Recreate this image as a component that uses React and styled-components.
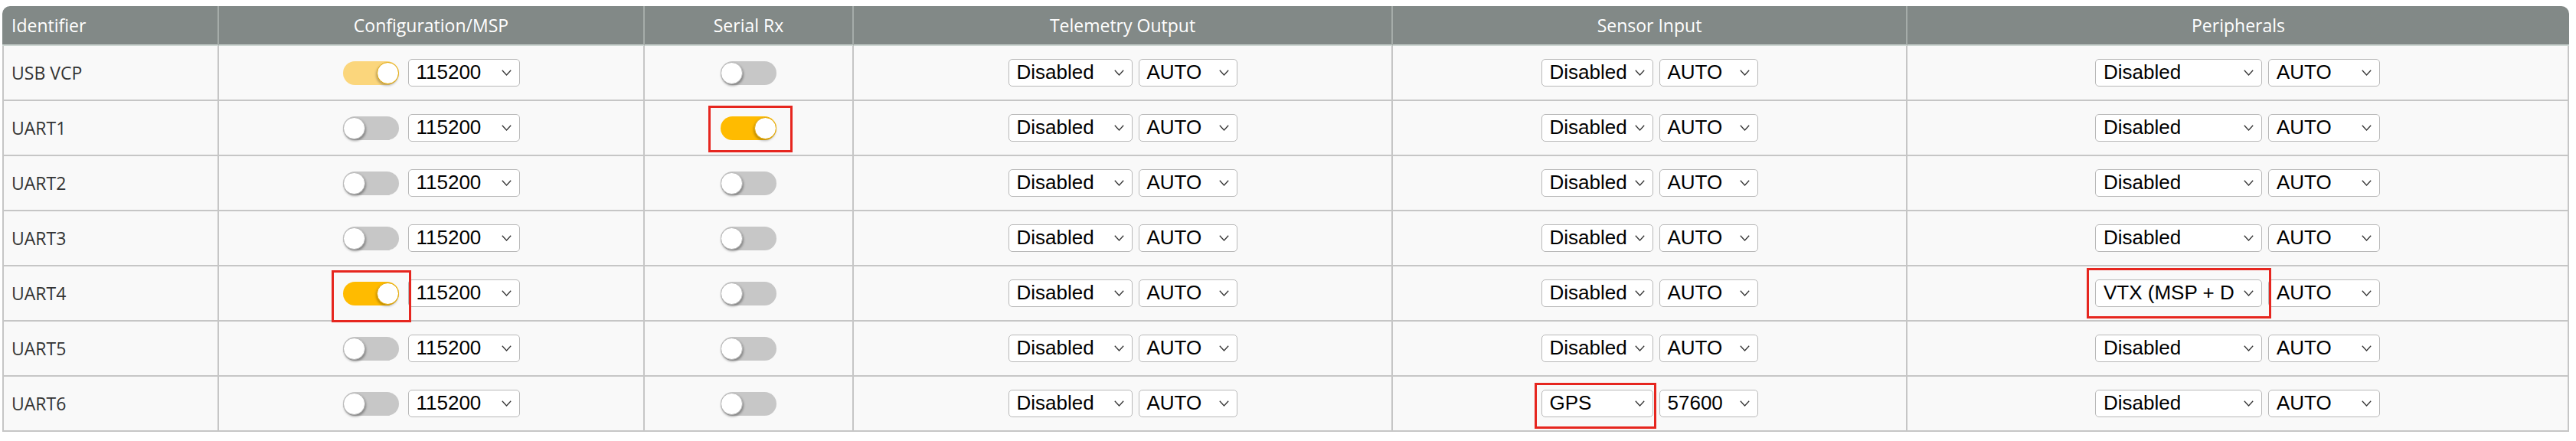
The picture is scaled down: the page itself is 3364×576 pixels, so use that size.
import React from "react";
import styled, { createGlobalStyle } from "styled-components";

const GlobalStyle = createGlobalStyle`
  *, *::before, *::after {
    box-sizing: border-box;
  }

  body {
    margin: 0;
    background: #fff;
  }
`;

const Page = styled.div`
  width: 3364px;
  height: 576px;
  padding: 8px 0 0 3px;
  overflow: hidden;
`;

const Table = styled.div`
  display: grid;
  grid-template-columns: 283px 556px 273px 704px 672px 864px;
  grid-template-rows: 52px repeat(7, 72px);
  width: 3352px;

  font-family: "Open Sans", sans-serif;
`;

const Row = styled.div`
  display: contents;
`;

const HeadCell = styled.div`
  display: flex;
  align-items: center;
  justify-content: ${p => (p.$left ? "flex-start" : "center")};
  padding-left: ${p => (p.$left ? "12px" : "0")};

  background: #828987;
  color: #fff;
  font-size: 23px;

  border-right: 2px solid #a5aca9;
  border-bottom: 2px solid #cdd6d2;

  &:first-child {
    border-top-left-radius: 10px;
  }

  &:last-child {
    border-top-right-radius: 10px;
    border-right: none;
  }
`;

const Cell = styled.div`
  display: flex;
  align-items: center;
  justify-content: center;
  gap: ${p => p.$gap || 8}px;

  background: #f9f9f9;
  border-right: 2px solid #c6c6c6;
  border-bottom: 2px solid #c6c6c6;

  &:first-child {
    justify-content: flex-start;
    padding-left: 10px;
    border-left: 2px solid #c6c6c6;
    color: #333;
    font-size: 23px;
  }
`;

const Track = styled.span`
  position: relative;
  display: inline-block;
  width: 73px;
  height: 31px;
  border-radius: 16px;

  background: ${p => (p.$on ? (p.$dim ? "#fbd67c" : "#ffbb00") : "#c7c7c7")};
`;

const Knob = styled.span`
  position: absolute;
  top: 1px;
  left: ${p => (p.$on ? "44px" : "0")};
  width: 29px;
  height: 29px;
  border-radius: 50%;

  background: #fff;
  border: 1px solid ${p => (p.$on ? "#e2a600" : "#b5b5b5")};
  box-shadow: ${p =>
    p.$on ? "-1px 2px 3px rgba(0, 0, 0, 0.25)" : "1px 2px 3px rgba(0, 0, 0, 0.35)"};
`;

const Mark = styled.span`
  position: relative;
  display: inline-flex;

  &::after {
    content: "";
    position: absolute;
    top: -${p => p.$box[0]}px;
    right: -${p => p.$box[1]}px;
    bottom: -${p => p.$box[2]}px;
    left: -${p => p.$box[3]}px;
    border: 3px solid #e6261f;
    pointer-events: none;
  }
`;

const SelectBox = styled.div`
  display: flex;
  align-items: center;
  width: ${p => p.$w}px;
  height: 36px;
  padding: 0 10px;

  background: #fff;
  border: 1.5px solid #b8b8b8;
  border-radius: 5px;

  font-family: "Liberation Sans", Arial, sans-serif;
  font-size: 26px;
  color: #000;
`;

const SelectText = styled.span`
  white-space: nowrap;
  line-height: 1.15;
`;

const Chevron = styled.svg`
  flex: none;
  margin-left: auto;
`;

const Toggle = ({ on, dim }) => (
  <Track $on={on} $dim={dim}>
    <Knob $on={on} />
  </Track>
);

const Select = ({ w, value }) => (
  <SelectBox $w={w}>
    <SelectText>{value}</SelectText>
    <Chevron width="13" height="8" viewBox="0 0 13 8">
      <polyline
        points="0.8,0.8 6.5,7 12.2,0.8"
        fill="none"
        stroke="#333"
        strokeWidth="1.3"
      />
    </Chevron>
  </SelectBox>
);

const Highlight = ({ box, children }) =>
  box ? <Mark $box={box}>{children}</Mark> : children;

const ports = [
  { id: "USB VCP", msp: true, dim: true },
  { id: "UART1", rx: true, rxMark: [14, 21, 16, 16] },
  { id: "UART2" },
  { id: "UART3" },
  {
    id: "UART4",
    msp: true,
    mspMark: [15, 16, 22, 15],
    periph: "VTX (MSP + D",
    periphMark: [15, 12, 15, 11]
  },
  { id: "UART5" },
  {
    id: "UART6",
    sensor: "GPS",
    sensorBaud: "57600",
    sensorMark: [9, 4, 15, 9]
  }
];

const headers = [
  "Identifier",
  "Configuration/MSP",
  "Serial Rx",
  "Telemetry Output",
  "Sensor Input",
  "Peripherals"
];

export default function App() {
  return (
    <Page>
      <GlobalStyle />
      <Table>
        <Row>
          {headers.map((h, i) => (
            <HeadCell key={h} $left={i === 0}>
              {h}
            </HeadCell>
          ))}
        </Row>

        {ports.map(p => (
          <Row key={p.id}>
            <Cell>{p.id}</Cell>
            <Cell $gap={12}>
              <Highlight box={p.mspMark}>
                <Toggle on={!!p.msp} dim={p.dim} />
              </Highlight>
              <Select w={146} value="115200" />
            </Cell>
            <Cell>
              <Highlight box={p.rxMark}>
                <Toggle on={!!p.rx} />
              </Highlight>
            </Cell>
            <Cell>
              <Select w={162} value="Disabled" />
              <Select w={129} value="AUTO" />
            </Cell>
            <Cell>
              <Highlight box={p.sensorMark}>
                <Select w={146} value={p.sensor || "Disabled"} />
              </Highlight>
              <Select w={129} value={p.sensorBaud || "AUTO"} />
            </Cell>
            <Cell>
              <Highlight box={p.periphMark}>
                <Select w={218} value={p.periph || "Disabled"} />
              </Highlight>
              <Select w={146} value="AUTO" />
            </Cell>
          </Row>
        ))}
      </Table>
    </Page>
  );
}
